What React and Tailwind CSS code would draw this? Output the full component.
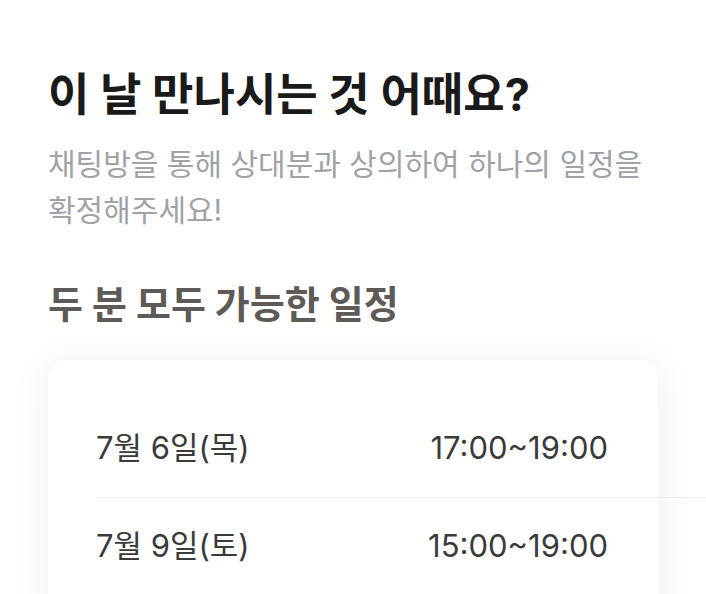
export default function App() {
  const slots = [
    { date: "7월 6일(목)", time: "17:00~19:00" },
    { date: "7월 9일(토)", time: "15:00~19:00" },
  ];

  return (
    <main
      className="min-h-screen w-full overflow-hidden bg-white px-12 pt-[67px]"
      style={{ fontFamily: 'Inter, "Noto Sans CJK KR", sans-serif' }}
    >
      {/* ─── Header ─── */}
      <h1 className="text-[45px] font-bold leading-[56px] text-[#1a1a1a]">
        이 날 만나시는 것 어때요?
      </h1>
      <p className="mt-[18px] text-[30px] leading-[46px] text-[#a0a2a7]">
        채팅방을 통해 상대분과 상의하여 하나의 일정을 확정해주세요!
      </p>

      {/* ─── Available slots ─── */}
      <h2 className="mt-[47px] text-[38px] font-bold leading-[48px] text-[#5e5a57]">
        두 분 모두 가능한 일정
      </h2>

      <section className="mt-[32px] w-[610px] rounded-2xl bg-white pt-[40px] pb-10 shadow-[0_4px_40px_rgba(0,0,0,0.07)]">
        {slots.map((slot, i) => (
          <div key={slot.date}>
            {i > 0 && <div className="ml-12 h-px w-[610px] bg-[#e9e9e9]" />}
            <div className="flex h-[97px] items-center justify-between pl-12 pr-[50px] text-[31px] text-[#3a3a3a]">
              <span>{slot.date}</span>
              <span>{slot.time}</span>
            </div>
          </div>
        ))}
      </section>
    </main>
  );
}
